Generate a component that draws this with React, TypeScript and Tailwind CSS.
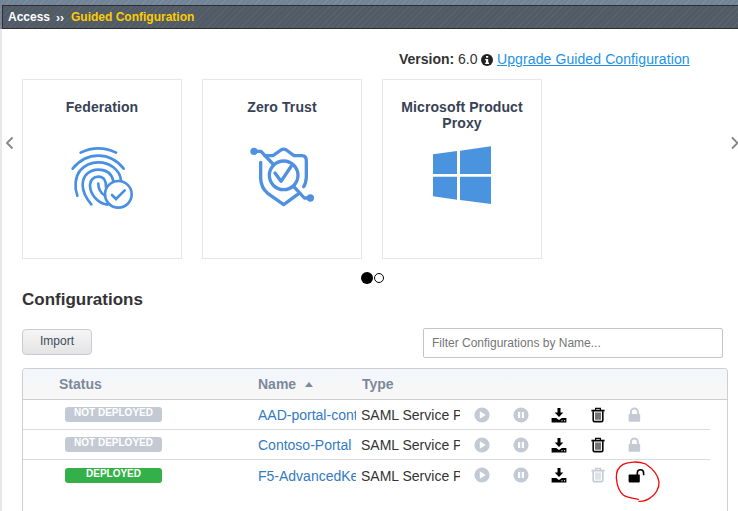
import type { ReactNode } from "react";

function Fingerprint() {
  return (
    <svg width="64" height="65" viewBox="210 195 192 195" fill="none" stroke="#4a90e2" strokeWidth="8" strokeLinecap="round">
      <path d="M242 218Q295 192 348 218" />
      <path d="M218 266Q250 227 295 227Q340 227 371 266" />
      <path d="M232 347C222 320 226 290 240 272C256 253 275 247 295 247C330 247 360 270 363 301" />
      <path d="M274 373C256 352 248 335 248 315C248 285 270 269 295 269C318 269 335 281 340 303" />
      <path d="M322 374C290 370 270 340 270 315C270 300 281 290 295 290C312 290 319 303 318 322" />
      <path d="M295 311C295 330 304 340 315 347" />
      <circle cx="355" cy="343" r="40" />
      <path d="M336 345L348 357L374 331" />
    </svg>
  );
}

function Shield() {
  return (
    <svg width="66" height="63" viewBox="176 200 198 189" fill="none" stroke="#5090e0" strokeWidth="10" strokeLinecap="round" strokeLinejoin="round">
      <circle cx="191" cy="219" r="11" fill="#5090e0" stroke="none" />
      <circle cx="360" cy="359" r="11" fill="#5090e0" stroke="none" />
      <path d="M191 219H212L248 257M310 324L342 359H360" />
      <path d="M224 232H248L272 215Q280 210 288 215L311 232H335Q348 232 348 248V295Q347 315 340 325" />
      <path d="M211 252V300Q212 328 232 345L280 379L325 346" />
      <circle cx="280" cy="291" r="43" />
      <path d="M254 284L272 309L303 263" />
    </svg>
  );
}

function WindowsLogo() {
  return (
    <svg width="60" height="60" viewBox="186 198 180 180" fill="#4a93df">
      <path d="M189 226L261 216V285H189ZM270 215L363 202V285H270ZM189 293H261V362L189 352ZM270 293H363V375L270 363Z" />
    </svg>
  );
}

function Card({ title, children }: { title: string; children: ReactNode }) {
  return (
    <div className="flex h-[180px] w-[160px] shrink-0 flex-col items-center border border-[#e6e7ee]">
      <h3 className="mt-[19px] h-[46px] w-[140px] text-center text-[14px] leading-[16px] font-bold tracking-[0.1px] text-[#374254]">{title}</h3>
      {children}
    </div>
  );
}

function Play() {
  return (
    <svg width="16" height="16" viewBox="0 0 16 16">
      <circle cx="8" cy="8" r="7.6" fill="#c4cad4" />
      <path d="M5.8 4.3V11.7L11.8 8Z" fill="#fff" />
    </svg>
  );
}

function Pause() {
  return (
    <svg width="16" height="16" viewBox="0 0 16 16">
      <circle cx="8" cy="8" r="7.6" fill="#c4cad4" />
      <path d="M5 5H7.2V11H5ZM8.8 5H11V11H8.8Z" fill="#fff" />
    </svg>
  );
}

function Download() {
  return (
    <svg width="16" height="16" viewBox="0 0 16 16">
      <path d="M6.5 1H9.5V5.5H12.3L8 10L3.7 5.5H6.5Z" />
      <path d="M0.6 11H5.2L8 13L10.8 11H15.4V15.4H0.6Z" />
      <path d="M10.4 13.3H11.5V14.3H10.4ZM13 13.3H14.1V14.3H13Z" fill="#fff" />
    </svg>
  );
}

function Trash({ muted }: { muted: boolean }) {
  const color = muted ? "#c4cad4" : "#050505";
  return (
    <svg width="14" height="16" viewBox="0 0 14 16" fill="none" stroke={color}>
      <path d="M0.4 3.6H13.6" strokeWidth="1.8" />
      <path d="M4.6 3V1.4H9.4V3" strokeWidth="1.2" />
      <path d="M2.2 4.3V13.2Q2.2 14.6 3.5 14.6H10.5Q11.8 14.6 11.8 13.2V4.3" strokeWidth="1.6" />
      <path d="M5 5.6V12.8M7 5.6V12.8M9 5.6V12.8" strokeWidth="1.1" />
    </svg>
  );
}

function Lock({ open }: { open: boolean }) {
  return open ? (
    <svg width="20" height="16" viewBox="0 0 20 16">
      <rect x="3.6" y="7.6" width="11.2" height="7.8" rx="0.8" />
      <path d="M12.3 8V5.9A3.1 3.1 0 0 1 18.6 5.9V8.3" fill="none" stroke="#000" strokeWidth="1.6" />
    </svg>
  ) : (
    <svg width="20" height="16" viewBox="0 0 20 16">
      <rect x="3.6" y="7" width="11.6" height="7.8" rx="0.8" fill="#c4cad4" />
      <path d="M5.9 7.5V5A3.5 3.5 0 0 1 12.9 5V7.5" fill="none" stroke="#c4cad4" strokeWidth="1.9" />
    </svg>
  );
}

const rows = [
  { name: "AAD-portal-contoso", deployed: false },
  { name: "Contoso-Portal", deployed: false },
  { name: "F5-AdvancedKerberos", deployed: true },
];

export default function App() {
  return (
    <div className="relative h-[511px] w-[738px] overflow-hidden bg-white font-['Liberation_Sans',Arial,sans-serif] text-[#333]">
      <header className="h-[29px] bg-[#718394] bg-[repeating-linear-gradient(135deg,transparent_0px,transparent_3px,#7c8e9e_3px,#7c8e9e_4px)] pt-[5px] pl-[2px]">
        <div className="flex h-6 w-[738px] items-center border border-[#302e34] bg-[#505b66] bg-[repeating-linear-gradient(135deg,transparent_0px,transparent_3px,#59636d_3px,#59636d_4px)] pl-[5px] text-[12px] font-bold text-white">
          <span className="w-[48px]">Access</span>
          <span className="w-[15px] pt-[2px]">››</span>
          <span className="text-[#ffcc00]">Guided Configuration</span>
        </div>
      </header>
      <main className="h-[482px] border-l-2 border-[#e8e8e5]">
        <div className="flex h-[50px] items-center pt-[11px] pl-[397px] text-[14px]">
          <b className="w-[59px]">Version:</b>
          <span className="w-[23px]">6.0</span>
          <svg className="mr-[4px] shrink-0" width="12" height="12" viewBox="0 0 12 12">
            <circle cx="6" cy="6" r="6" fill="#222" />
            <path d="M5 2H7.2V3.8H5ZM4.2 4.9H7.2V8.5H8V10H4.2V8.5H5V6.3H4.2Z" fill="#fff" />
          </svg>
          <a className="tracking-[0.1px] whitespace-nowrap text-[#1b92e8] underline">Upgrade Guided Configuration</a>
        </div>
        <section className="flex items-start">
          <svg className="mt-[57px] ml-[3px] mr-[7px] shrink-0" width="10" height="14" viewBox="0 0 10 14" fill="none" stroke="#858585" strokeWidth="1.8"><path d="M7.5 1.5L2 7L7.5 12.5" /></svg>
          <div className="flex gap-5">
            <Card title="Federation"><Fingerprint /></Card>
            <Card title="Zero Trust"><Shield /></Card>
            <Card title="Microsoft Product Proxy"><WindowsLogo /></Card>
          </div>
          <svg className="mt-[57px] ml-[188px] shrink-0" width="10" height="14" viewBox="0 0 10 14" fill="none" stroke="#858585" strokeWidth="1.8"><path d="M2 1.5L7.5 7L2 12.5" /></svg>
        </section>
        <div className="flex h-[31px] items-center gap-[1px] pt-[7px] pl-[359px]">
          <i className="h-3 w-3 rounded-full bg-black" />
          <i className="h-[10px] w-[10px] rounded-full border border-black" />
        </div>
        <h2 className="pl-5 text-[17px] leading-[20px] font-bold">Configurations</h2>
        <div className="mt-[18px] flex h-[30px] justify-between pr-[15px] pl-5">
          <button className="mt-[1px] flex h-[26px] w-[70px] items-center justify-center rounded-[4px] border border-[#cacbd2] bg-linear-to-b from-[#f5f5f5] to-[#e4e4e6] pb-[2px] text-[12px] text-[#414b5c]">Import</button>
          <input className="h-[30px] w-[300px] rounded-[2px] border border-[#c5c5c7] px-2 text-[12px] placeholder:text-[#757575] outline-none" placeholder="Filter Configurations by Name..." />
        </div>
        <section className="mt-[10px] ml-5 h-[150px] w-[706px] rounded-t-[4px] border border-b-0 border-[#cfcfd3]">
          <div className="flex h-[31px] items-center rounded-t-[3px] border-b border-[#cfcfd3] bg-linear-to-b from-[#f3f7fb] from-40% to-[#f7f7f7] to-45% text-[14px] font-bold text-[#7c899d]">
            <span className="w-[199px] pl-9">Status</span>
            <span className="ml-9 flex w-[104px] items-center">Name<i className="ml-[9px] border-x-[4.5px] border-b-[5px] border-x-transparent border-b-[#7c899d]" /></span>
            <span>Type</span>
          </div>
          {rows.map((row, i) => (
            <div key={row.name} className={"flex h-[30px] w-[687px] items-center text-[14px] " + (i < 2 ? "border-b border-[#dcdcdf]" : "")}>
              <div className="w-[235px] pl-[42px]">
                <div className={"h-[15px] w-[97px] rounded-[3px] text-center text-[10px] leading-[12px] font-bold text-white " + (row.deployed ? "bg-[#34b048]" : "bg-[#c4cad4]")}>
                  {row.deployed ? "DEPLOYED" : "NOT DEPLOYED"}
                </div>
              </div>
              <a className="w-[98px] overflow-hidden pt-[2px] whitespace-nowrap text-[#337ac3]">{row.name}</a>
              <span className="ml-[5px] w-[99px] overflow-hidden pt-[2px] whitespace-nowrap">SAML Service Provider</span>
              <span className="ml-[3px] flex w-[38px] justify-center"><Play /></span>
              <span className="flex w-[39px] justify-center"><Pause /></span>
              <span className="flex w-[38px] justify-center"><Download /></span>
              <span className="flex w-[39px] justify-center"><Trash muted={row.deployed} /></span>
              <span className="flex w-[35px] justify-center"><Lock open={row.deployed} /></span>
            </div>
          ))}
        </section>
      </main>
      <svg className="absolute top-[459px] left-[613px]" width="50" height="48" viewBox="459 192 150 144" fill="none" stroke="#f00a0a" strokeWidth="4" strokeLinecap="round" strokeLinejoin="round">
        <path d="M557 207C535 198 505 200 489 208C472 218 468 231 469 249C471 272 476 289 491 301C502 309 519 309 535 313M557 207C575 219 594 237 597 261C598 279 587 298 574 306C564 315 551 319 537 319" />
      </svg>
    </div>
  );
}
